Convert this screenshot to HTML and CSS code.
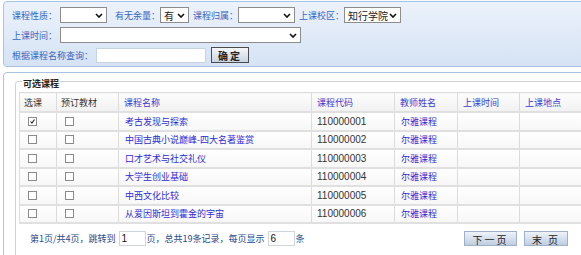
FILE: index.html
```html
<!DOCTYPE html>
<html lang="zh-CN">

<head>
    <meta charset="UTF-8">
    <title>选课</title>
    <link rel="stylesheet" href="styles.css">
</head>

<body>
    <div class="viewport">
    <div class="page">
        <div class="search-panel">
            <div class="search-row">
                <span class="label">课程性质：</span>
                <span class="select w47"><span class="select-text"></span><svg class="chev" viewBox="0 0 8 5"><path d="M1 1 L4 4 L7 1" /></svg></span>
                <span class="label gap8">有无余量：</span>
                <span class="select w29"><span class="select-text">有</span><svg class="chev" viewBox="0 0 8 5"><path d="M1 1 L4 4 L7 1" /></svg></span>
                <span class="label gap4">课程归属：</span>
                <span class="select w57"><span class="select-text"></span><svg class="chev" viewBox="0 0 8 5"><path d="M1 1 L4 4 L7 1" /></svg></span>
                <span class="label gap4">上课校区：</span>
                <span class="select w57"><span class="select-text">知行学院</span><svg class="chev" viewBox="0 0 8 5"><path d="M1 1 L4 4 L7 1" /></svg></span>
            </div>
            <div class="search-row">
                <span class="label">上课时间：</span>
                <span class="select w241"><span class="select-text"></span><svg class="chev" viewBox="0 0 8 5"><path d="M1 1 L4 4 L7 1" /></svg></span>
            </div>
            <div class="search-row">
                <span class="label">根据课程名称查询：</span>
                <span class="text-input w110"></span>
                <button class="btn-ok">确定</button>
            </div>
        </div>

        <div class="result-panel">
            <fieldset class="course-box">
                <legend>可选课程</legend>
                <table class="course-table">
                    <colgroup>
                        <col style="width: 37px">
                        <col style="width: 62px">
                        <col style="width: 193px">
                        <col style="width: 83px">
                        <col style="width: 63px">
                        <col style="width: 62px">
                        <col style="width: 63px">
                    </colgroup>
                    <thead>
                        <tr>
                            <th class="plain">选课</th>
                            <th class="plain">预订教材</th>
                            <th>课程名称</th>
                            <th>课程代码</th>
                            <th>教师姓名</th>
                            <th>上课时间</th>
                            <th>上课地点</th>
                        </tr>
                    </thead>
                    <tbody id="courseRows"></tbody>
                </table>

                <div class="pager">
                    <span>第1页/共4页，跳转到</span>
                    <span class="page-input">1</span>
                    <span>页，总共19条记录，每页显示</span>
                    <span class="page-input">6</span>
                    <span>条</span>
                    <span class="spacer"></span>
                    <button class="btn-page">下一页</button>
                    <button class="btn-page">末 页</button>
                </div>
            </fieldset>
        </div>
    </div>
    </div>

    <script>
        const courses = [
            { name: '考古发现与探索', code: '110000001', teacher: '尔雅课程', checked: true },
            { name: '中国古典小说巅峰-四大名著鉴赏', code: '110000002', teacher: '尔雅课程' },
            { name: '口才艺术与社交礼仪', code: '110000003', teacher: '尔雅课程' },
            { name: '大学生创业基础', code: '110000004', teacher: '尔雅课程' },
            { name: '中西文化比较', code: '110000005', teacher: '尔雅课程' },
            { name: '从爱因斯坦到霍金的宇宙', code: '110000006', teacher: '尔雅课程' }
        ];

        const tick = '<svg viewBox="0 0 9 9"><path d="M2 4.5 L3.8 6.5 L7 2" /></svg>';

        function renderCourses() {
            const body = document.getElementById('courseRows');
            courses.forEach(course => {
                const row = document.createElement('tr');
                row.innerHTML =
                    `<td class="box-cell"><span class="checkbox">${course.checked ? tick : ''}</span></td>` +
                    `<td class="box-cell"><span class="checkbox"></span></td>` +
                    `<td class="link">${course.name}</td>` +
                    `<td class="code">${course.code}</td>` +
                    `<td class="link">${course.teacher}</td>` +
                    `<td></td><td></td>`;
                body.appendChild(row);
            });
        }

        renderCourses();
    </script>
</body>

</html>
```

FILE: styles.css
```css
body {
    margin: 0;
    overflow: hidden;
    background-color: #fff;
    font-family: "Noto Sans CJK SC", "Liberation Sans", sans-serif;
    font-size: 9px;
}

/* the page is wider and taller than the window, clip it here */
.viewport {
    width: 581px;
    height: 255px;
    overflow: hidden;
}

.page {
    width: 640px;
    padding-left: 3px;
}

/* search area */

.search-panel {
    margin-top: 1px;
    padding: 3px 0 1px 8px;
    border: 1px solid #aac3e4;
    border-radius: 4px;
    background: linear-gradient(#ecf2fb, #d5e3f5);
}

.search-row {
    display: flex;
    align-items: center;
    height: 20px;
}

.label {
    color: #3766c0;
    white-space: nowrap;
    margin-right: 3px;
}

.gap8 {
    margin-left: 8px;
    margin-right: 0;
}

.gap4 {
    margin-left: 4px;
    margin-right: 0;
}

.select {
    display: flex;
    align-items: center;
    box-sizing: border-box;
    height: 16px;
    padding: 0 2px 0 3px;
    background-color: #fff;
    border: 1px solid #8d8d8d;
    color: #222;
}

.select-text {
    flex: 1;
    font-size: 10px;
}

.chev {
    width: 8px;
    height: 5px;
    margin-right: 1px;
    fill: none;
    stroke: #111;
    stroke-width: 1.6;
}

.w29 { width: 29px; }
.w47 { width: 47px; }
.w57 { width: 57px; }
.w241 { width: 241px; }
.w110 { width: 110px; }

.text-input {
    box-sizing: border-box;
    height: 15px;
    margin-top: 1px;
    background-color: #fff;
    border: 1px solid #c8d3e2;
}

.btn-ok {
    box-sizing: border-box;
    width: 38px;
    height: 16px;
    margin-left: 5px;
    padding: 0;
    border: 1px solid #4b4b4b;
    background: linear-gradient(#f4f6fa, #c9d3e1);
    color: #222;
    font-family: inherit;
    font-size: 10px;
    font-weight: bold;
    letter-spacing: 2px;
}

/* result area */

.result-panel {
    margin-top: 5px;
    height: 200px;
    padding-left: 11px;
    border: 1px solid #aac3e4;
    border-radius: 4px;
    background-color: #fff;
}

.course-box {
    margin: 0;
    padding: 3px 14px 20px 3px;
    border: 1px solid #d2d2d2;
    border-radius: 3px;
}

.course-box legend {
    margin-left: 3px;
    padding: 6px 1px 0;
    line-height: 10px;
    font-size: 9px;
    font-weight: bold;
    color: #222;
}

.course-table {
    table-layout: fixed;
    width: 563px;
    border-collapse: collapse;
    border: 1px solid #d6d6d6;
}

.course-table th,
.course-table td {
    border: 1px solid #dcdcdc;
    border-bottom: 2px solid #e0e0e0;
    padding: 0 0 0 5px;
    text-align: left;
    white-space: nowrap;
    overflow: hidden;
}

.course-table th {
    height: 18px;
    font-weight: normal;
    color: #3a3ad0;
    background: linear-gradient(#fdfdfd, #f1f1f1);
}

.course-table th.plain {
    color: #333;
    padding-left: 4px;
}

.course-table td {
    height: 16.5px;
    background: linear-gradient(#ffffff, #f7f7f7);
}

.course-table td.link {
    color: #2c2cd6;
    padding-left: 6px;
}

.course-table td.code {
    color: #333;
    font-family: "Liberation Sans", sans-serif;
    font-size: 10px;
}

.course-table td.box-cell {
    padding-left: 8px;
}

.checkbox {
    display: block;
    box-sizing: border-box;
    width: 9px;
    height: 9px;
    border: 1px solid #8a8a8a;
    background-color: #fff;
}

.checkbox svg {
    display: block;
    width: 7px;
    height: 7px;
    fill: none;
    stroke: #222;
    stroke-width: 1.4;
}

.pager {
    display: flex;
    align-items: center;
    width: 563px;
    box-sizing: border-box;
    height: 16px;
    margin-top: 6px;
    padding: 0 14px 0 11px;
    color: #27498a;
}

.page-input {
    box-sizing: border-box;
    width: 27px;
    height: 15px;
    margin: 0 1px 0 3px;
    padding-left: 2px;
    border: 1px solid #d0d6de;
    color: #111;
    font-family: "Liberation Sans", sans-serif;
    font-size: 10px;
    line-height: 13px;
}

.spacer {
    flex: 1;
}

.btn-page {
    box-sizing: border-box;
    height: 15px;
    padding: 0;
    margin-left: 7px;
    border: 1px solid #9fb1c9;
    background: linear-gradient(#eef3f9, #bfcde0);
    color: #222;
    font-family: inherit;
    font-size: 10px;
    letter-spacing: 2px;
    width: 53px;
}

.btn-page:last-child {
    width: 44px;
}
```
